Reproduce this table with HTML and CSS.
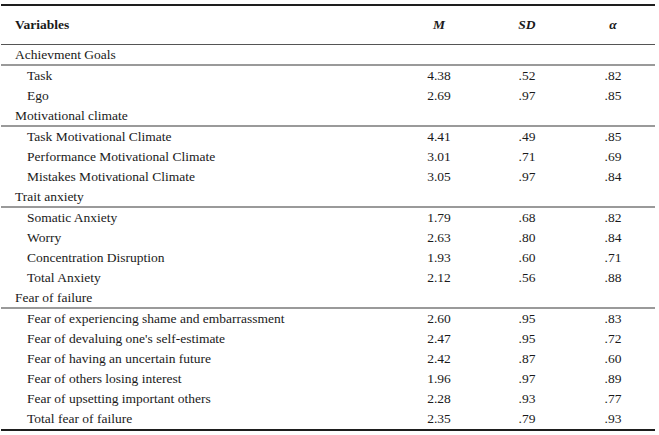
FILE: index.html
```html
<!DOCTYPE html>
<html>
<head>
<meta charset="utf-8">
<link rel="stylesheet" href="styles.css">
</head>
<body>
<table class="stats">
  <colgroup>
    <col class="c-var"><col class="c-num"><col class="c-num"><col class="c-last">
  </colgroup>
  <thead>
    <tr class="head">
      <th class="var-h">Variables</th>
      <th class="num-h"><i>M</i></th>
      <th class="num-h"><i>SD</i></th>
      <th class="num-h alpha"><i>α</i></th>
    </tr>
  </thead>
  <tbody>
    <tr class="group"><td colspan="4">Achievment Goals</td></tr>
    <tr class="item"><td>Task</td><td>4.38</td><td>.52</td><td>.82</td></tr>
    <tr class="item"><td>Ego</td><td>2.69</td><td>.97</td><td>.85</td></tr>
    <tr class="group"><td colspan="4">Motivational climate</td></tr>
    <tr class="item"><td>Task Motivational Climate</td><td>4.41</td><td>.49</td><td>.85</td></tr>
    <tr class="item"><td>Performance Motivational Climate</td><td>3.01</td><td>.71</td><td>.69</td></tr>
    <tr class="item"><td>Mistakes Motivational Climate</td><td>3.05</td><td>.97</td><td>.84</td></tr>
    <tr class="group"><td colspan="4">Trait anxiety</td></tr>
    <tr class="item"><td>Somatic Anxiety</td><td>1.79</td><td>.68</td><td>.82</td></tr>
    <tr class="item"><td>Worry</td><td>2.63</td><td>.80</td><td>.84</td></tr>
    <tr class="item"><td>Concentration Disruption</td><td>1.93</td><td>.60</td><td>.71</td></tr>
    <tr class="item"><td>Total Anxiety</td><td>2.12</td><td>.56</td><td>.88</td></tr>
    <tr class="group"><td colspan="4">Fear of failure</td></tr>
    <tr class="item"><td>Fear of experiencing shame and embarrassment</td><td>2.60</td><td>.95</td><td>.83</td></tr>
    <tr class="item"><td>Fear of devaluing one's self-estimate</td><td>2.47</td><td>.95</td><td>.72</td></tr>
    <tr class="item"><td>Fear of having an uncertain future</td><td>2.42</td><td>.87</td><td>.60</td></tr>
    <tr class="item"><td>Fear of others losing interest</td><td>1.96</td><td>.97</td><td>.89</td></tr>
    <tr class="item"><td>Fear of upsetting important others</td><td>2.28</td><td>.93</td><td>.77</td></tr>
    <tr class="item last"><td>Total fear of failure</td><td>2.35</td><td>.79</td><td>.93</td></tr>
  </tbody>
</table>
</body>
</html>
```

FILE: styles.css
```css
html, body {
  margin: 0;
  padding: 0;
  background: #ffffff;
}

body {
  font-family: "Liberation Serif", "Times New Roman", serif;
  font-size: 13.5px;
  color: #1a1a1a;
}

.stats {
  margin: 4px 0 0 1px;
  width: 654px;
  border-collapse: collapse;
  table-layout: fixed;
  border-top: 2px solid #1e1e1e;
  border-bottom: 2px solid #1e1e1e;
}

.c-var { width: 394px; }
.c-num { width: 88px; }
.c-last { width: 84px; }

.head th {
  height: 38px;
  padding: 0;
  border-bottom: 1px solid #555555;
  font-weight: 600;
  vertical-align: middle;
}

.var-h {
  text-align: left;
  padding-left: 14px !important;
}

.num-h {
  text-align: center;
  font-weight: 700;
}

.alpha {
  font-weight: 400;
}

.group td {
  height: 19px;
  padding: 0 0 0 14px;
  border-bottom: 2px solid #9a9a9a;
  line-height: 19px;
}

.item td {
  height: 20px;
  padding: 0;
  line-height: 20px;
  text-align: center;
}

.item td:first-child {
  text-align: left;
  padding-left: 26px;
}
```
